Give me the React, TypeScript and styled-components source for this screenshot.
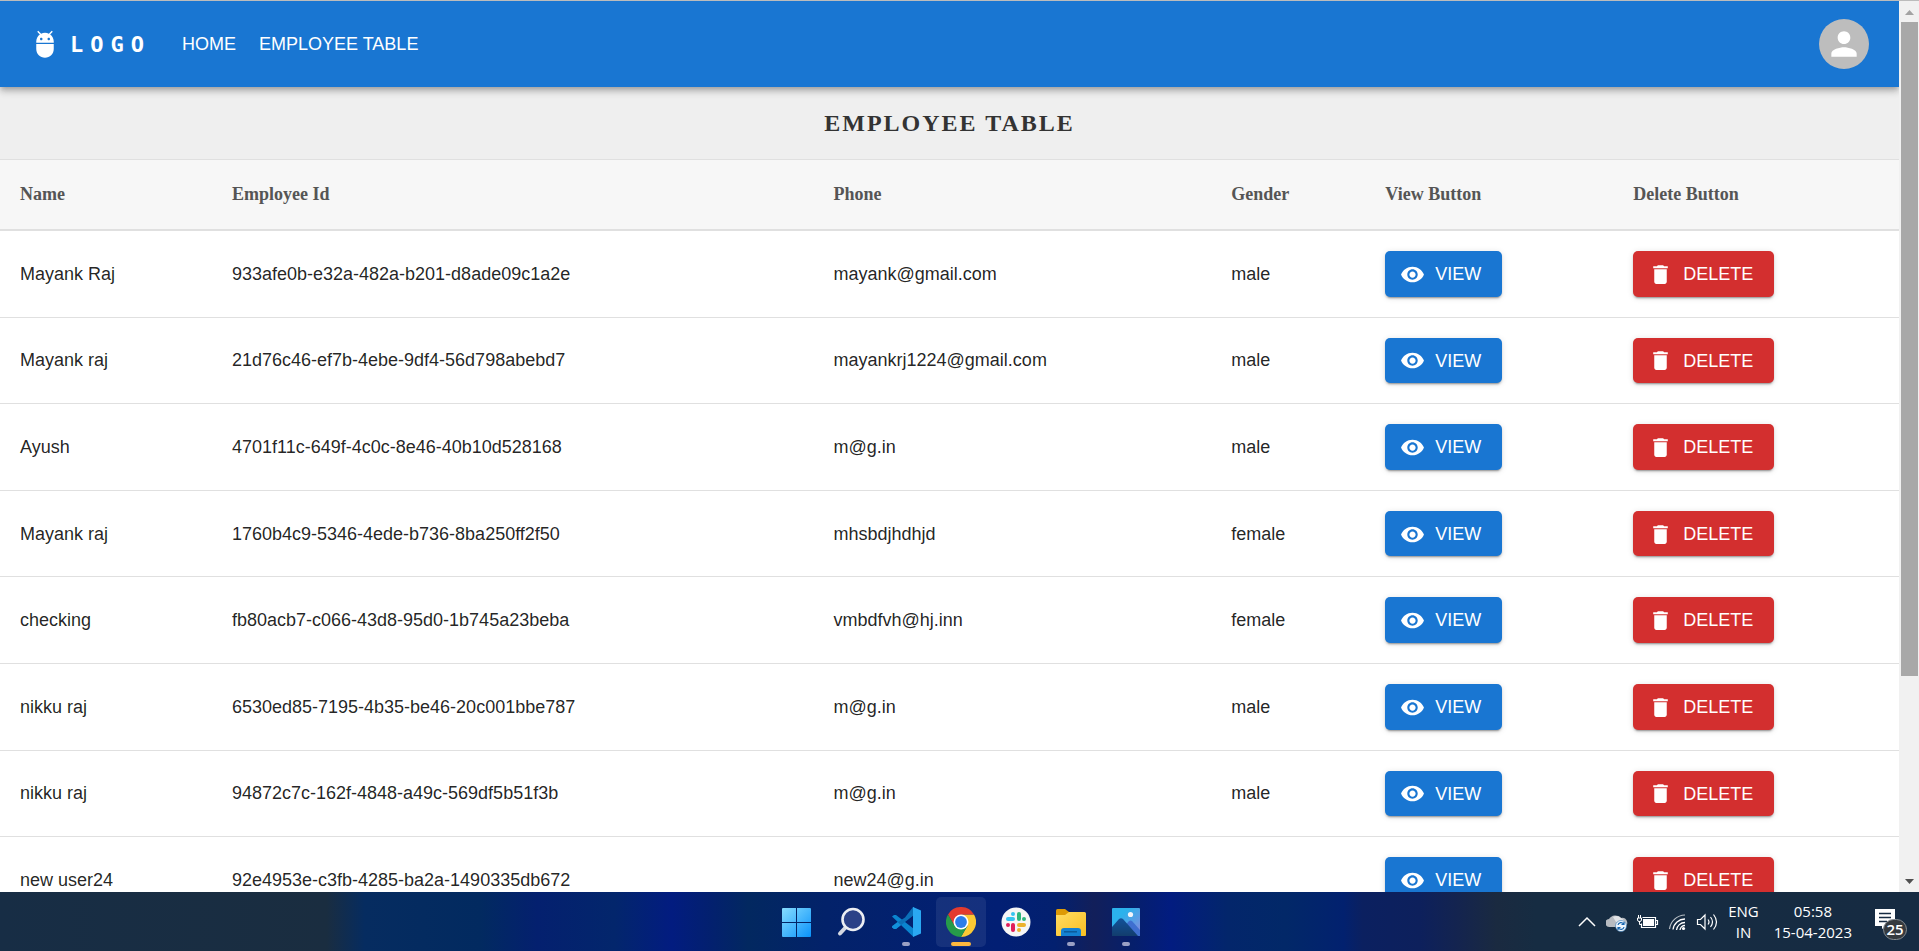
import React from 'react';
import styled, { createGlobalStyle, css } from 'styled-components';

const GlobalStyle = createGlobalStyle`
  *, *::before, *::after { box-sizing: border-box; }
  body {
    margin: 0;
    background: #fff;
    color: rgba(0, 0, 0, 0.87);
    font-family: 'Liberation Sans', Arial, Helvetica, sans-serif;
    font-size: 18px;
  }
`;

/* ---------- Shell ---------- */

const Desktop = styled.div`
  display: flex;
  flex-direction: column;
  height: 100vh;
  overflow: hidden;
`;

const BrowserWindow = styled.div`
  flex: 1;
  min-height: 0;
  display: flex;
  border-top: 1px solid #bcbcbc;
`;

const Page = styled.div`
  flex: 1;
  min-width: 0;
  overflow: hidden;
`;

const ScrollTrack = styled.div`
  display: flex;
  flex-direction: column;
  align-items: center;
  width: 20px;
  padding-left: 1px;
  background: #f1f1f1;
`;

const ScrollArrow = styled.svg`
  flex: none;
  width: 19px;
  height: 21px;
`;

const ScrollRail = styled.div`
  flex: 1;
  width: 17px;
`;

const ScrollThumb = styled.div`
  height: 77%;
  background: #a8a8a8;
`;

/* ---------- App bar ---------- */

const AppBar = styled.header`
  position: relative;
  display: flex;
  align-items: center;
  height: 86px;
  padding: 0 30px;
  color: #fff;
  background: #1976d2;
  box-shadow: 0 2px 5px -1px rgba(0, 0, 0, 0.2), 0 5px 6px 0 rgba(0, 0, 0, 0.14),
    0 1px 12px 0 rgba(0, 0, 0, 0.12);
`;

const Brand = styled.a`
  display: flex;
  align-items: center;
  gap: 10px;
  margin-right: 31px;
  color: inherit;
  text-decoration: none;
  font-family: 'DejaVu Sans Mono', monospace;
  font-size: 22px;
  font-weight: 700;
  letter-spacing: 7px;
`;

const Nav = styled.nav`
  display: flex;
  flex: 1;
  gap: 23px;
`;

const NavLink = styled.a`
  color: inherit;
  line-height: 30px;
  text-decoration: none;
  text-transform: uppercase;
`;

const Avatar = styled.button`
  display: grid;
  place-items: center;
  width: 50px;
  height: 50px;
  padding: 0;
  border: 0;
  border-radius: 50%;
  color: #fff;
  background: #bdbdbd;
`;

const Icon = styled.svg<{ $size: number }>`
  flex: none;
  display: block;
  width: ${(p) => p.$size}px;
  height: ${(p) => p.$size}px;
  fill: currentColor;
`;

/* ---------- Table ---------- */

const TableTitle = styled.h1`
  margin: 0;
  padding: 20px;
  border-bottom: 1px solid #e0e0e0;
  background: #efefef;
  color: #333;
  font-family: 'Liberation Serif', 'Times New Roman', serif;
  font-size: 24px;
  line-height: 32px;
  letter-spacing: 2px;
  text-align: center;
  text-transform: uppercase;
`;

const Table = styled.table`
  width: 100%;
  table-layout: fixed;
  border-collapse: separate;
  border-spacing: 0;
`;

const Column = styled.col<{ $width?: string }>`
  width: ${(p) => p.$width ?? 'auto'};
`;

const HeadCell = styled.th`
  padding: 20px;
  border-bottom: 2px solid #e0e0e0;
  background: #f7f7f7;
  color: #555;
  font-family: 'Liberation Serif', 'Times New Roman', serif;
  font-size: 18px;
  line-height: 29px;
  text-align: left;
`;

const Cell = styled.td`
  padding: 20px;
  border-bottom: 1px solid #e0e0e0;
  line-height: 26px;
  vertical-align: middle;
`;

const ActionButton = styled.button<{ $danger?: boolean }>`
  display: flex;
  align-items: center;
  gap: 10px;
  padding: 8px 21px 7px 15px;
  border: 0;
  border-radius: 5px;
  color: #fff;
  background: ${(p) => (p.$danger ? '#d32f2f' : '#1976d2')};
  box-shadow: 0 3px 1px -2px rgba(0, 0, 0, 0.2), 0 2px 2px 0 rgba(0, 0, 0, 0.14),
    0 1px 6px 0 rgba(0, 0, 0, 0.12);
  font-family: inherit;
  font-size: 18px;
  line-height: 1.7;
  text-transform: uppercase;
`;

/* ---------- Taskbar ---------- */

const Taskbar = styled.footer`
  display: grid;
  grid-template-columns: 1fr auto 1fr;
  align-items: center;
  height: 59px;
  padding-left: 3px;
  color: #fff;
  font-family: 'Open Sans', 'Noto Sans', sans-serif;
  background: linear-gradient(
    90deg,
    #172d45 0%,
    #1a2d40 17%,
    #062c60 19%,
    #022a60 25%,
    #04206f 28%,
    #03266c 32%,
    #021c80 35%,
    #03206f 37%,
    #022860 39%,
    #03226a 43%,
    #021f74 52%,
    #03206f 55%,
    #121f5a 57%,
    #061f6b 59%,
    #021c80 61%,
    #03266b 64%,
    #022868 67%,
    #02216f 70%,
    #0b2060 71%,
    #0d205c 74%,
    #14244f 76%,
    #1a2a40 78%,
    #162c42 80%,
    #162b42 100%
  );
`;

const Apps = styled.div`
  grid-column: 2;
  display: flex;
  gap: 5px;
`;

const AppButton = styled.button<{ $active?: boolean; $running?: boolean }>`
  position: relative;
  display: grid;
  place-items: center;
  width: 50px;
  height: 50px;
  padding: 0;
  border: 0;
  border-radius: 5px;
  background: ${(p) => (p.$active ? 'rgba(255, 255, 255, 0.08)' : 'transparent')};
  ${(p) =>
    p.$running &&
    css`
      &::after {
        content: '';
        position: absolute;
        bottom: 1px;
        left: 50%;
        width: ${p.$active ? 20 : 8}px;
        height: 4px;
        border-radius: 2px;
        background: ${p.$active ? '#fdb73e' : '#9aa0c4'};
        transform: translateX(-50%);
      }
    `}
`;

const Glyph = styled.svg`
  display: block;
  width: 30px;
  height: 30px;
`;

const Tray = styled.div`
  display: flex;
  align-items: center;
  justify-content: flex-end;
  padding-right: 11px;
`;

const TrayIcons = styled.div`
  display: flex;
  gap: 6px;
  margin-right: 8px;
`;

const TrayGlyph = styled.svg`
  display: block;
  width: 24px;
  height: 24px;
  fill: none;
  stroke: #fff;
`;

const TrayText = styled.div`
  display: flex;
  flex-direction: column;
  align-items: center;
  margin-right: 15px;
  font-size: 15px;
  line-height: 21px;
`;

const Notifications = styled.button`
  position: relative;
  width: 37px;
  height: 38px;
  margin-left: 4px;
  padding: 0;
  border: 0;
  background: transparent;
`;

const Note = styled.svg`
  position: absolute;
  top: 6px;
  left: 4px;
  width: 20px;
  height: 20px;
`;

const Badge = styled.span`
  position: absolute;
  right: 1px;
  bottom: 1px;
  width: 24px;
  height: 21px;
  border: 1px solid #858b90;
  border-radius: 12px;
  background: #353a3f;
  color: #fff;
  font-family: 'Open Sans', sans-serif;
  font-size: 15px;
  font-weight: 600;
  line-height: 19px;
  text-align: center;
`;

/* ---------- Icons ---------- */

const AdbIcon = () => (
  <Icon $size={30} viewBox="0 0 24 24" aria-hidden="true">
    <path d="M5 16c0 3.87 3.13 7 7 7s7-3.13 7-7v-4H5v4zM16.12 4.37l2.1-2.1-.82-.83-2.3 2.31C14.16 3.28 13.12 3 12 3s-2.16.28-3.09.75L6.6 1.44l-.82.83 2.1 2.1C6.14 5.64 5 7.68 5 10v1h14v-1c0-2.32-1.14-4.36-2.88-5.63zM9 9c-.55 0-1-.45-1-1s.45-1 1-1 1 .45 1 1-.45 1-1 1zm6 0c-.55 0-1-.45-1-1s.45-1 1-1 1 .45 1 1-.45 1-1 1z" />
  </Icon>
);

const PersonIcon = () => (
  <Icon $size={38} viewBox="0 0 24 24" aria-hidden="true">
    <path d="M12 12c2.21 0 4-1.79 4-4s-1.79-4-4-4-4 1.79-4 4 1.79 4 4 4zm0 2c-2.67 0-8 1.34-8 4v2h16v-2c0-2.66-5.33-4-8-4z" />
  </Icon>
);

const ViewIcon = () => (
  <Icon $size={25} viewBox="0 0 24 24" aria-hidden="true">
    <path d="M12 4.5C7 4.5 2.73 7.61 1 12c1.73 4.39 6 7.5 11 7.5s9.27-3.11 11-7.5c-1.73-4.39-6-7.5-11-7.5zM12 17c-2.76 0-5-2.24-5-5s2.24-5 5-5 5 2.24 5 5-2.24 5-5 5zm0-8c-1.66 0-3 1.34-3 3s1.34 3 3 3 3-1.34 3-3-1.34-3-3-3z" />
  </Icon>
);

const DeleteIcon = () => (
  <Icon $size={25} viewBox="0 0 24 24" aria-hidden="true">
    <path d="M6 19c0 1.100.9 2 2 2h8c1.100 0 2-.9 2-2V7H6v12zM19 4h-3.500l-1-1h-5l-1 1H5v2h14V4z" />
  </Icon>
);

const WindowsIcon = () => (
  <Glyph viewBox="0 0 30 30" aria-hidden="true">
    <defs>
      <linearGradient id="win" x1="0" y1="0" x2="1" y2="1" gradientUnits="objectBoundingBox">
        <stop offset="0" stopColor="#86dcfe" />
        <stop offset="1" stopColor="#0a93fb" />
      </linearGradient>
    </defs>
    <path fill="url(#win)" d="M2 1h13v14H1V2a1 1 0 0 1 1-1zM16 1h13a1 1 0 0 1 1 1v13H16zM1 16h14v14H2a1 1 0 0 1-1-1zM16 16h14v13a1 1 0 0 1-1 1H16z" />
  </Glyph>
);

const SearchIcon = () => (
  <Glyph viewBox="0 0 30 30" aria-hidden="true">
    <path d="M10 20L4 26.500" stroke="#d4d8e2" strokeWidth="4" strokeLinecap="round" />
    <circle cx="17" cy="12.500" r="10.500" fill="#2b4187" stroke="#eceef3" strokeWidth="2.600" />
  </Glyph>
);

const CodeIcon = () => (
  <Glyph viewBox="0 0 30 30" aria-hidden="true">
    <path d="M1 9.500L3 8h2l18 14v7.500h-1z" fill="#0a84cf" />
    <path d="M14 10.500L22 0h1v8L5 22H3l-2-2v-1z" fill="#0b6fb8" />
    <path d="M1 19.500v1L3 22h2l5-4-3.500-3z" fill="#1290dc" />
    <path d="M22 0l8 3.500v23L22 30z" fill="#2aa8f2" />
  </Glyph>
);

const ChromeIcon = () => (
  <Glyph viewBox="0 0 30 30" aria-hidden="true">
    <path d="M15 7.500h13A15 15 0 0 1 15 30l6.500-11.250z" fill="#fcc934" />
    <path d="M8.500 18.750L2 7.500A15 15 0 0 1 28 7.500H15z" fill="#e33b2e" />
    <path d="M8.500 18.750L2 7.500A15 15 0 0 0 15 30l6.500-11.250z" fill="#269b4a" />
    <circle cx="15" cy="15" r="7.500" fill="#fff" />
    <circle cx="15" cy="15" r="5.900" fill="#2b7de9" />
  </Glyph>
);

const SlackIcon = () => (
  <Glyph viewBox="0 0 30 30" aria-hidden="true">
    <circle cx="15" cy="15" r="14.500" fill="#f6f6f6" />
    <g strokeWidth="4" strokeLinecap="round">
      <path d="M7 12h5" stroke="#36c5f0" />
      <path d="M12 7v0.010" stroke="#36c5f0" />
      <path d="M18 7v5" stroke="#2eb67d" />
      <path d="M23 12h0.010" stroke="#2eb67d" />
      <path d="M18 18h5" stroke="#ecb22e" />
      <path d="M18 23v0.010" stroke="#ecb22e" />
      <path d="M12 18v5" stroke="#e01e5a" />
      <path d="M7 18h0.010" stroke="#e01e5a" />
    </g>
  </Glyph>
);

const FolderIcon = () => (
  <Glyph viewBox="0 0 30 30" aria-hidden="true">
    <defs>
      <linearGradient id="folder" x1="0" y1="0" x2="1" y2="1">
        <stop offset="0" stopColor="#ffdc63" />
        <stop offset="1" stopColor="#f9bf22" />
      </linearGradient>
    </defs>
    <path d="M0 3.500Q0 2 1.500 2H9l4 3v5H0z" fill="#dd9a06" />
    <path d="M0 8h9l4-3h15.500Q30 5 30 6.500V28q0 1-1 1H1q-1 0-1-1z" fill="url(#folder)" />
    <path d="M5 29v-5q0-3 3-3h14q3 0 3 3v5z" fill="#1481d2" />
    <path d="M8 24.800h13" stroke="#0b5796" strokeWidth="1.400" />
  </Glyph>
);

const PhotosIcon = () => (
  <Glyph viewBox="0 0 30 30" aria-hidden="true">
    <defs>
      <linearGradient id="sky" x1="0" y1="0" x2="1" y2="1">
        <stop offset="0.300" stopColor="#2bb2ec" />
        <stop offset="1" stopColor="#8f86dc" />
      </linearGradient>
      <linearGradient id="hill" x1="0" y1="0" x2="0" y2="1">
        <stop offset="0" stopColor="#12529a" />
        <stop offset="1" stopColor="#123d6d" />
      </linearGradient>
    </defs>
    <rect x="1" y="1" width="28" height="28" rx="1" fill="url(#sky)" />
    <path d="M13 20l5-6q1.500-1 3 0l8 9v6H13z" fill="#3f6fd0" />
    <path d="M1 20l7-8q2-1.500 4 0l15 17H1z" fill="url(#hill)" />
    <circle cx="19.500" cy="7.500" r="2.600" fill="#f2f5fa" />
  </Glyph>
);

const TaskbarIcons = () => (
  <TrayIcons>
    <TrayGlyph viewBox="0 0 24 24" aria-hidden="true">
      <path d="M3 16l8-8 8 8" strokeWidth="1.500" />
    </TrayGlyph>
    <TrayGlyph viewBox="0 0 24 24" aria-hidden="true">
      <path d="M4 17a4 4 0 0 1-1-8 7 6 0 0 1 12-1 5 5 0 0 1 4 9z" fill="#b7bbc1" stroke="none" />
      <path d="M7 7a6 5 0 0 1 8 1 5 5 0 0 1 3 3l-8 1z" fill="#e1e3e6" stroke="none" />
      <circle cx="15" cy="16" r="5.500" fill="#eef5fc" stroke="#1667ae" strokeWidth="0.500" />
      <path d="M12 15a3 3 0 0 1 5.500-1M18 17a3 3 0 0 1-5.500 1M18 12v2.500h-2.500M12 20v-2.500h2.500" stroke="#1565b0" strokeWidth="1.200" />
    </TrayGlyph>
    <TrayGlyph viewBox="0 0 24 24" aria-hidden="true">
      <path d="M6.500 7.500h13v10h-14v-4M19.500 10.500h2v4h-2" strokeWidth="1.200" />
      <rect x="7" y="9" width="11" height="7" fill="#fff" stroke="none" />
      <path d="M2.500 5v3M4.500 5v3M1.500 8h4v2q0 1.500-2 1.500T1.500 10zM3.500 11v3.500h2" strokeWidth="1" />
    </TrayGlyph>
    <TrayGlyph viewBox="0 0 24 24" aria-hidden="true">
      <path d="M3.500 19A16 16 0 0 1 19 5" strokeWidth="1.200" opacity="0.700" />
      <path d="M7 19.500A12 12 0 0 1 19 9M10.500 20a8.500 8.500 0 0 1 8.500-7.500M14 20a5 5 0 0 1 5-4.500" strokeWidth="1.300" />
      <circle cx="17.500" cy="18.500" r="1.600" fill="#fff" stroke="none" />
    </TrayGlyph>
    <TrayGlyph viewBox="0 0 24 24" aria-hidden="true">
      <path d="M1.500 9.500h3l4.500-4.500v14l-4.500-4.500h-3z" strokeWidth="1.200" />
      <path d="M12 9.500q2 2.500 0 5M14.500 7q4 5 0 10M17.500 4.500q6 7.500 0 15" strokeWidth="1.200" />
    </TrayGlyph>
  </TrayIcons>
);

/* ---------- Data ---------- */

interface Employee {
  name: string;
  id: string;
  phone: string;
  gender: string;
}

const employees: Employee[] = [
  { name: 'Mayank Raj', id: '933afe0b-e32a-482a-b201-d8ade09c1a2e', phone: 'mayank@gmail.com', gender: 'male' },
  { name: 'Mayank raj', id: '21d76c46-ef7b-4ebe-9df4-56d798abebd7', phone: 'mayankrj1224@gmail.com', gender: 'male' },
  { name: 'Ayush', id: '4701f11c-649f-4c0c-8e46-40b10d528168', phone: 'm@g.in', gender: 'male' },
  { name: 'Mayank raj', id: '1760b4c9-5346-4ede-b736-8ba250ff2f50', phone: 'mhsbdjhdhjd', gender: 'female' },
  { name: 'checking', id: 'fb80acb7-c066-43d8-95d0-1b745a23beba', phone: 'vmbdfvh@hj.inn', gender: 'female' },
  { name: 'nikku raj', id: '6530ed85-7195-4b35-be46-20c001bbe787', phone: 'm@g.in', gender: 'male' },
  { name: 'nikku raj', id: '94872c7c-162f-4848-a49c-569df5b51f3b', phone: 'm@g.in', gender: 'male' },
  { name: 'new user24', id: '92e4953e-c3fb-4285-ba2a-1490335db672', phone: 'new24@g.in', gender: '' },
];

const columns = [
  { label: 'Name', width: '11.16%' },
  { label: 'Employee Id', width: '31.68%' },
  { label: 'Phone', width: '20.95%' },
  { label: 'Gender', width: '8.11%' },
  { label: 'View Button', width: '13.06%' },
  { label: 'Delete Button' },
];

const EmployeeRow = ({ employee }: { employee: Employee }) => (
  <tr>
    <Cell>{employee.name}</Cell>
    <Cell>{employee.id}</Cell>
    <Cell>{employee.phone}</Cell>
    <Cell>{employee.gender}</Cell>
    <Cell>
      <ActionButton type="button">
        <ViewIcon />
        View
      </ActionButton>
    </Cell>
    <Cell>
      <ActionButton type="button" $danger>
        <DeleteIcon />
        Delete
      </ActionButton>
    </Cell>
  </tr>
);

export default function App() {
  return (
    <Desktop>
      <GlobalStyle />
      <BrowserWindow>
        <Page>
          <AppBar>
            <Brand href="#">
              <AdbIcon />
              LOGO
            </Brand>
            <Nav>
              <NavLink href="#home">Home</NavLink>
              <NavLink href="#employees">Employee Table</NavLink>
            </Nav>
            <Avatar type="button" aria-label="Account">
              <PersonIcon />
            </Avatar>
          </AppBar>
          <main>
            <TableTitle>Employee Table</TableTitle>
            <Table>
              <colgroup>
                {columns.map((c) => (
                  <Column key={c.label} $width={c.width} />
                ))}
              </colgroup>
              <thead>
                <tr>
                  {columns.map((c) => (
                    <HeadCell key={c.label} scope="col">
                      {c.label}
                    </HeadCell>
                  ))}
                </tr>
              </thead>
              <tbody>
                {employees.map((e) => (
                  <EmployeeRow key={e.id} employee={e} />
                ))}
              </tbody>
            </Table>
          </main>
        </Page>
        <ScrollTrack aria-hidden="true">
          <ScrollArrow viewBox="0 0 19 21">
            <path d="M5 14l4.500-5 4.500 5z" fill="#a3a3a3" />
          </ScrollArrow>
          <ScrollRail>
            <ScrollThumb />
          </ScrollRail>
          <ScrollArrow viewBox="0 0 19 21">
            <path d="M5 8l4.500 5L14 8z" fill="#505050" />
          </ScrollArrow>
        </ScrollTrack>
      </BrowserWindow>
      <Taskbar>
        <Apps>
          <AppButton type="button" aria-label="Start"><WindowsIcon /></AppButton>
          <AppButton type="button" aria-label="Search"><SearchIcon /></AppButton>
          <AppButton type="button" aria-label="Visual Studio Code" $running><CodeIcon /></AppButton>
          <AppButton type="button" aria-label="Chrome" $running $active><ChromeIcon /></AppButton>
          <AppButton type="button" aria-label="Slack"><SlackIcon /></AppButton>
          <AppButton type="button" aria-label="File Explorer" $running><FolderIcon /></AppButton>
          <AppButton type="button" aria-label="Photos" $running><PhotosIcon /></AppButton>
        </Apps>
        <Tray>
          <TaskbarIcons />
          <TrayText>
            <span>ENG</span>
            <span>IN</span>
          </TrayText>
          <TrayText>
            <span>05:58</span>
            <span>15-04-2023</span>
          </TrayText>
          <Notifications type="button" aria-label="Notifications">
            <Note viewBox="0 0 20 20" aria-hidden="true">
              <path d="M0 0h20v17h-9l-4 3v-3H0z" fill="#fff" />
              <path d="M4 4.500h12M4 8.500h12M4 12.500h8" stroke="#162b42" strokeWidth="1.300" />
            </Note>
            <Badge>25</Badge>
          </Notifications>
        </Tray>
      </Taskbar>
    </Desktop>
  );
}
